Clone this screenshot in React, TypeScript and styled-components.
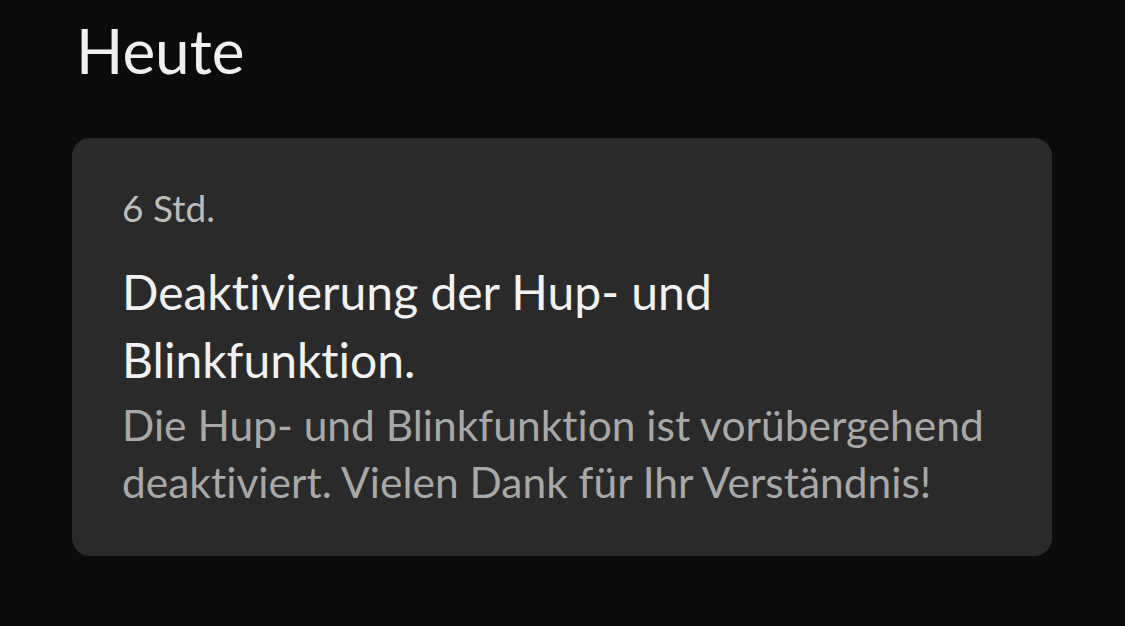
import React, { ReactElement } from 'react';
import styled, { createGlobalStyle } from 'styled-components';

const GlobalStyle = createGlobalStyle`
  html, body {
    margin: 0;
    padding: 0;
    background: #0b0b0b;
  }
  body {
    font-family: Lato, 'Liberation Sans', sans-serif;
    font-variant-ligatures: none;
    -webkit-font-smoothing: antialiased;
  }
`;

const Page = styled.div`
  width: 1125px;
  height: 626px;
  padding: 0 73px 0 72px;
  box-sizing: border-box;
  background: #0b0b0b;
  overflow: hidden;
`;

const SectionTitle = styled.h1`
  margin: 0;
  padding: 12px 0 0 4px;
  height: 138px;
  box-sizing: border-box;
  font-size: 62px;
  font-weight: 400;
  line-height: 76px;
  color: #f0f0f0;
`;

const Card = styled.div`
  display: flex;
  flex-direction: column;
  height: 418px;
  box-sizing: border-box;
  padding: 48px 50px 0;
  border-radius: 18px;
  background: #2a2a2a;
`;

const TimeLabel = styled.div`
  font-size: 37px;
  line-height: 44px;
  color: #bdbdbd;
`;

const NoticeTitle = styled.div`
  margin-top: 28px;
  font-size: 48px;
  line-height: 68px;
  color: #f2f2f2;
`;

const NoticeBody = styled.div`
  margin-top: 2px;
  font-size: 42.5px;
  line-height: 57px;
  color: #a8a8a8;
`;

const App = (): ReactElement => {
  return (
    <>
      <GlobalStyle />
      <Page>
        <SectionTitle>Heute</SectionTitle>
        <Card>
          <TimeLabel>6 Std.</TimeLabel>
          <NoticeTitle>
            Deaktivierung der Hup- und
            <br />
            Blinkfunktion.
          </NoticeTitle>
          <NoticeBody>
            Die Hup- und Blinkfunktion ist vorübergehend
            <br />
            deaktiviert. Vielen Dank für Ihr Verständnis!
          </NoticeBody>
        </Card>
      </Page>
    </>
  );
};

export default App;
